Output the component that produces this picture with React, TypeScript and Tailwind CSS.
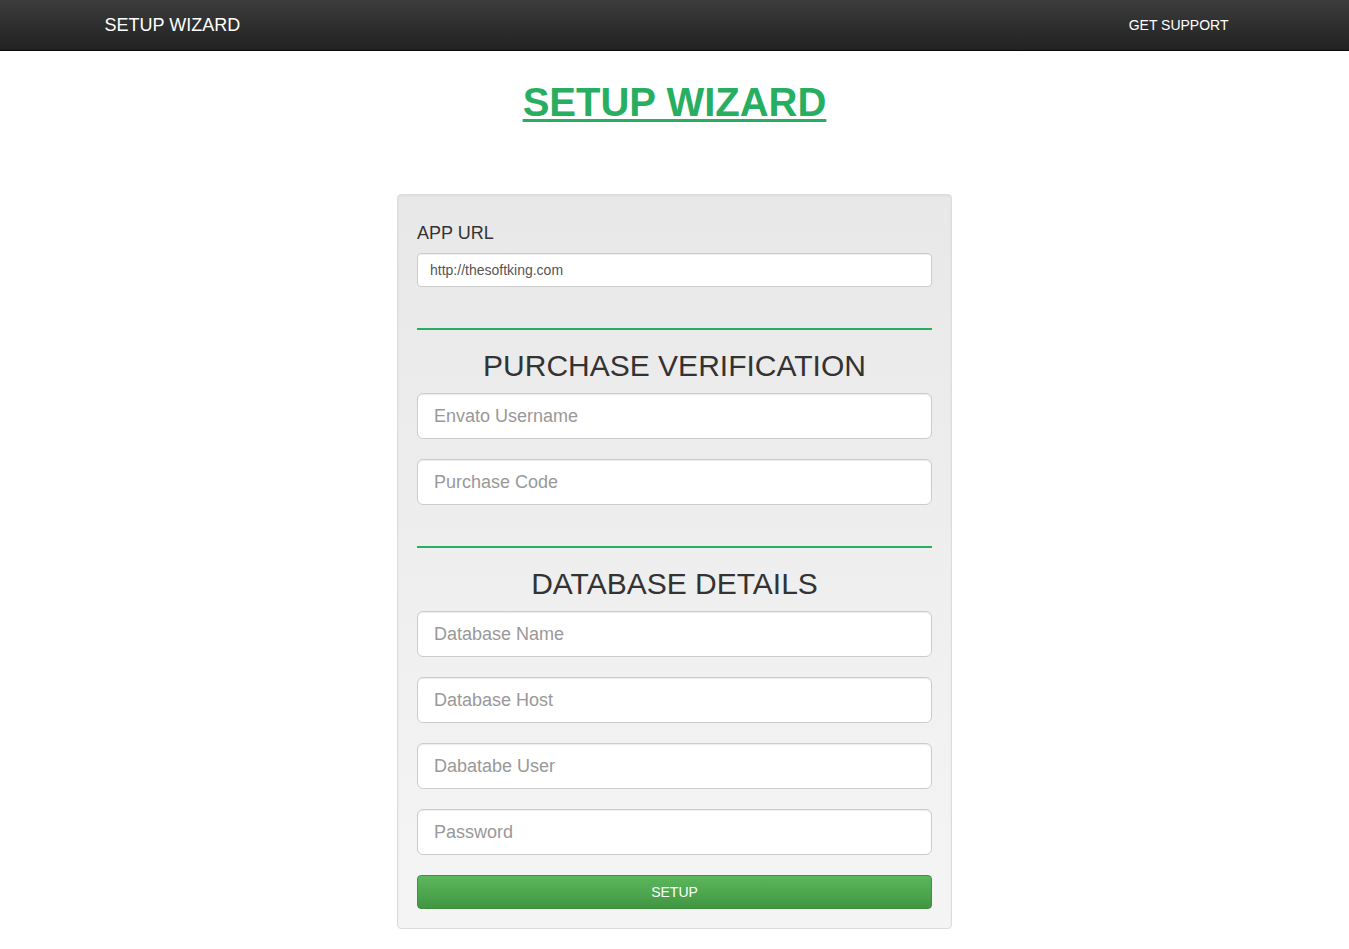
const field =
  "block w-full h-[46px] px-4 text-[18px] text-[#555] bg-white border border-[#ccc] rounded-[6px] shadow-[inset_0_1px_1px_rgba(0,0,0,0.075)] placeholder:text-[#999] outline-none";

function Section({ title, fields }: { title: string; fields: string[] }) {
  return (
    <div>
      <hr className="mt-[41px] border-0 h-[2px] bg-[#27ae60]" />
      <h2 className="mt-[19px] mb-[11px] text-center text-[30px] leading-[33px] text-[#333]">{title}</h2>
      <div className="flex flex-col gap-5">
        {fields.map((f) => (
          <input key={f} type={f === "Password" ? "password" : "text"} placeholder={f} className={field} />
        ))}
      </div>
    </div>
  );
}

export default function App() {
  return (
    <div className="min-h-screen bg-white font-['Liberation_Sans',Arial,sans-serif] text-[14px] text-[#333]">
      <nav className="h-[51px] border-b border-[#080808] bg-gradient-to-b from-[#3c3c3c] to-[#222]">
        <div className="mx-auto w-[1170px] h-[50px] px-[15px] flex items-center justify-between">
          <a href="#" className="text-[18px] text-white leading-5">SETUP WIZARD</a>
          <a href="#" className="text-[14px] text-white leading-5 mr-[16px] -mt-[1px]">GET SUPPORT</a>
        </div>
      </nav>

      <div className="mx-auto w-[1170px] px-[15px]">
        <h1 className="mt-[29px] text-center text-[40px] leading-[44px] font-bold">
          <a href="#" className="text-[#27ae60] underline decoration-[3px] underline-offset-[3px]">SETUP WIZARD</a>
        </h1>

        <div className="mt-[70px] mx-auto w-[555px] mb-5 p-[19px] border border-[#dcdcdc] rounded bg-gradient-to-b from-[#e8e8e8] to-[#f5f5f5] shadow-[inset_0_1px_3px_rgba(0,0,0,0.05)]">
          <label className="block mt-[6px] text-[18px] leading-[26px] text-[#333]">APP URL</label>
          <input
            type="text"
            defaultValue="http://thesoftking.com"
            className="mt-[7px] block w-full h-[34px] px-3 text-[14px] text-[#555] bg-white border border-[#ccc] rounded shadow-[inset_0_1px_1px_rgba(0,0,0,0.075)] outline-none"
          />

          <Section title="PURCHASE VERIFICATION" fields={["Envato Username", "Purchase Code"]} />
          <Section title="DATABASE DETAILS" fields={["Database Name", "Database Host", "Dabatabe User", "Password"]} />

          <button className="mt-5 block w-full h-[34px] text-[14px] text-white rounded border border-[#3e8f3e] bg-gradient-to-b from-[#5cb85c] to-[#419641]">
            SETUP
          </button>
        </div>
      </div>
    </div>
  );
}
